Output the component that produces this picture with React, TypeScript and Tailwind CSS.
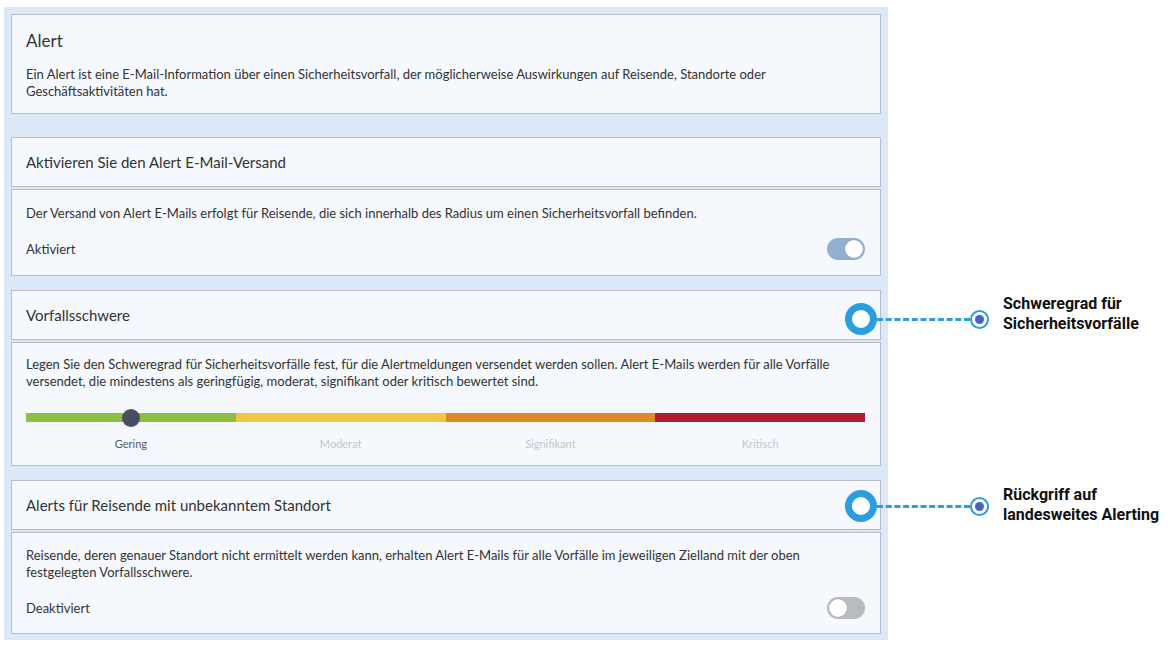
import React from "react";

const font = { fontFamily: "Lato, 'Liberation Sans', sans-serif" };

function Toggle({ on }: { on: boolean }) {
  return (
    <div
      className={`relative w-[38px] h-[22px] rounded-full ${on ? "bg-[#93aed3]" : "bg-[#b9bbbf]"}`}
    >
      <div
        className={`absolute top-[2px] w-[18px] h-[18px] rounded-full bg-white shadow-[0_0_1px_rgba(0,0,0,0.3)] ${on ? "right-[2px]" : "left-[2px]"}`}
      />
    </div>
  );
}

function Header({ title }: { title: string }) {
  return (
    <div className="h-[50px] flex items-center px-[14px] border border-[#b9bdc4] bg-[#f5f8fd] text-[15px] text-[#333]">
      {title}
    </div>
  );
}

function Body({ children, className = "" }: { children: React.ReactNode; className?: string }) {
  return (
    <div className={`mt-[2px] border border-[#b9bdc4] bg-[#f5f8fd] pl-[14px] pr-[15px] text-[13px] leading-[17px] text-[#333] ${className}`}>
      {children}
    </div>
  );
}

function Callout({ lines, lift }: { lines: string[]; lift: string }) {
  return (
    <div className="flex items-center">
      <div className="w-[32px] h-[32px] rounded-full border-[7px] border-[#2b9ee0] bg-white" />
      <div className="w-[93px] border-t-[3px] border-dashed border-[#2b9ee0]" />
      <div className="w-[19px] h-[19px] rounded-full border-2 border-[#2b9ee0] bg-white flex items-center justify-center">
        <div className="w-[9px] h-[9px] rounded-full bg-[#4664c4]" />
      </div>
      <div
        className={`ml-[14px] text-[16px] leading-[20px] font-bold text-[#111] ${lift}`}
        style={{ fontFamily: "Roboto, 'Liberation Sans', sans-serif" }}
      >
        {lines.map((l) => (
          <div key={l}>{l}</div>
        ))}
      </div>
    </div>
  );
}

const levels = [
  { label: "Gering", color: "bg-[#8dbf45]", text: "text-[#555a63]" },
  { label: "Moderat", color: "bg-[#efc945]", text: "text-[#c2c6cd]" },
  { label: "Signifikant", color: "bg-[#db8a26]", text: "text-[#c2c6cd]" },
  { label: "Kritisch", color: "bg-[#ad1c30]", text: "text-[#c2c6cd]" },
];

export default function App() {
  return (
    <div className="relative w-[1174px] h-[646px] bg-white overflow-hidden" style={font}>
      <div className="ml-[4px] mt-[7px] w-[884px] bg-[#dce8f7] px-[7px] pt-[7px] pb-[6px]">
        {/* Alert intro */}
        <div className="border border-[#b9bdc4] bg-[#f5f8fd] pl-[14px] pr-[15px] pt-[15px] pb-[13px] text-[#333]">
          <div className="text-[17px] leading-[22px] mb-[14px]">Alert</div>
          <div className="text-[13px] leading-[17px]">
            Ein Alert ist eine E-Mail-Information über einen Sicherheitsvorfall, der möglicherweise Auswirkungen auf
            Reisende, Standorte oder Geschäftsaktivitäten hat.
          </div>
        </div>

        {/* Versand */}
        <div className="mt-[23px]">
          <Header title="Aktivieren Sie den Alert E-Mail-Versand" />
          <Body className="pt-[15px] pb-[15px]">
            <div>
              Der Versand von Alert E-Mails erfolgt für Reisende, die sich innerhalb des Radius um einen
              Sicherheitsvorfall befinden.
            </div>
            <div className="mt-[16px] flex items-center justify-between">
              <span>Aktiviert</span>
              <Toggle on />
            </div>
          </Body>
        </div>

        {/* Vorfallsschwere */}
        <div className="mt-[14px]">
          <Header title="Vorfallsschwere" />
          <Body className="pt-[13px] pb-[14px]">
            <div>
              Legen Sie den Schweregrad für Sicherheitsvorfälle fest, für die Alertmeldungen versendet werden sollen.
              Alert E-Mails werden für alle Vorfälle versendet, die mindestens als geringfügig, moderat, signifikant
              oder kritisch bewertet sind.
            </div>
            <div className="mt-[23px] grid grid-cols-4">
              {levels.map((lv, i) => (
                <div key={lv.label} className="flex flex-col items-center">
                  <div className={`relative w-full h-[9px] ${lv.color}`}>
                    {i === 0 && (
                      <div className="absolute left-1/2 top-1/2 -translate-x-1/2 -translate-y-1/2 w-[18px] h-[18px] rounded-full bg-[#484d62]" />
                    )}
                  </div>
                  <div className={`mt-[15px] text-[11px] leading-[14px] ${lv.text}`}>{lv.label}</div>
                </div>
              ))}
            </div>
          </Body>
        </div>

        {/* Unbekannter Standort */}
        <div className="mt-[14px]">
          <Header title="Alerts für Reisende mit unbekanntem Standort" />
          <Body className="pt-[14px] pb-[14px]">
            <div>
              Reisende, deren genauer Standort nicht ermittelt werden kann, erhalten Alert E-Mails für alle Vorfälle
              im jeweiligen Zielland mit der oben festgelegten Vorfallsschwere.
            </div>
            <div className="mt-[16px] flex items-center justify-between">
              <span>Deaktiviert</span>
              <Toggle on={false} />
            </div>
          </Body>
        </div>
      </div>

      <div className="absolute left-[845px] top-[294px]">
        <Callout lines={["Schweregrad für", "Sicherheitsvorfälle"]} lift="mb-[10px]" />
      </div>
      <div className="absolute left-[845px] top-[485px]">
        <Callout lines={["Rückgriff auf", "landesweites Alerting"]} lift="mb-[2px]" />
      </div>
    </div>
  );
}
